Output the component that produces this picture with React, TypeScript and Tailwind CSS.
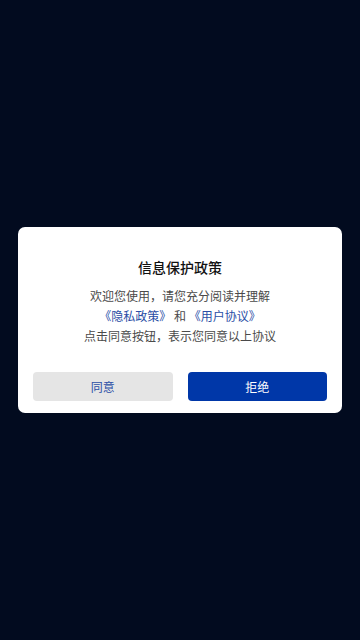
export default function App() {
  return (
    <div
      className="w-[360px] h-[640px] bg-[#020b1f] flex items-center justify-center"
      style={{ fontFamily: '"Noto Sans CJK SC", "Noto Sans", sans-serif' }}
    >
      <div className="w-[324px] bg-white rounded-[7px] pt-[30px] pb-[12px] px-[15px] flex flex-col items-center">
        <h2 className="text-[14px] leading-[20px] font-medium text-[#111]">信息保护政策</h2>
        <div className="mt-[9px] text-[12px] leading-[20px] text-[#4a4a4a] text-center">
          <p>欢迎您使用，请您充分阅读并理解</p>
          <p>
            <span className="text-[#2a4ea6]">《隐私政策》</span> 和 <span className="text-[#2a4ea6]">《用户协议》</span>
          </p>
          <p>点击同意按钮，表示您同意以上协议</p>
        </div>
        <div className="mt-[26px] w-full flex gap-[15px]">
          <button className="flex-1 h-[29px] rounded-[4px] bg-[#e5e5e5] text-[12px] text-[#2a4ea6]">同意</button>
          <button className="flex-1 h-[29px] rounded-[4px] bg-[#0037a8] text-[12px] text-white">拒绝</button>
        </div>
      </div>
    </div>
  );
}
